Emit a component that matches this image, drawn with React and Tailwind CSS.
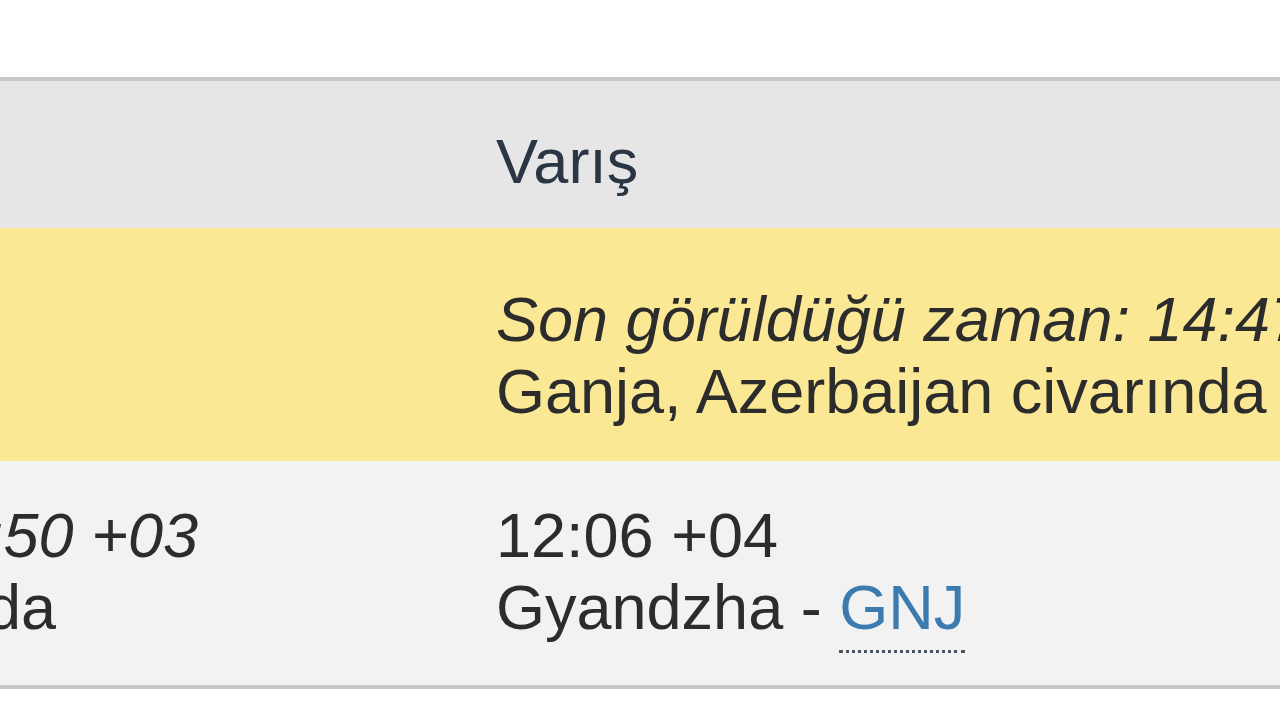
export default function App() {
  return (
    <div className="h-screen w-full overflow-hidden bg-white pt-[77px] font-['Liberation_Sans',Arial,Helvetica,sans-serif] text-[63px] leading-[72px] text-[#2c2c2c]">
      <div className="-ml-[84px] w-[1600px] border-y-4 border-[#c9c9c9]">
        {/* Header */}
        <div className="grid grid-cols-[580px_1fr] bg-[#e6e6e7] h-[147px]">
          <div></div>
          <div className="pt-[44px] text-[#2b3645]">Varış</div>
        </div>

        {/* Last seen */}
        <div className="grid grid-cols-[580px_1fr] bg-[#fae895] h-[233px]">
          <div></div>
          <div className="pt-[55px] whitespace-nowrap">
            <div className="italic">Son görüldüğü zaman: 14:47 +04</div>
            <div>Ganja, Azerbaijan civarında</div>
          </div>
        </div>

        {/* Times */}
        <div className="grid grid-cols-[580px_1fr] bg-[#f2f2f2] h-[224px]">
          <div className="pt-[38px] whitespace-nowrap">
            <div className="italic">12:50 +03</div>
            <div>Orda</div>
          </div>
          <div className="pt-[38px] whitespace-nowrap">
            <div>12:06 +04</div>
            <div>
              Gyandzha -{' '}
              <span className="text-[#3b7bb0] border-b-[3px] border-dotted border-[#4a5560] pb-[8px]">GNJ</span>
            </div>
          </div>
        </div>
      </div>
    </div>
  );
}
